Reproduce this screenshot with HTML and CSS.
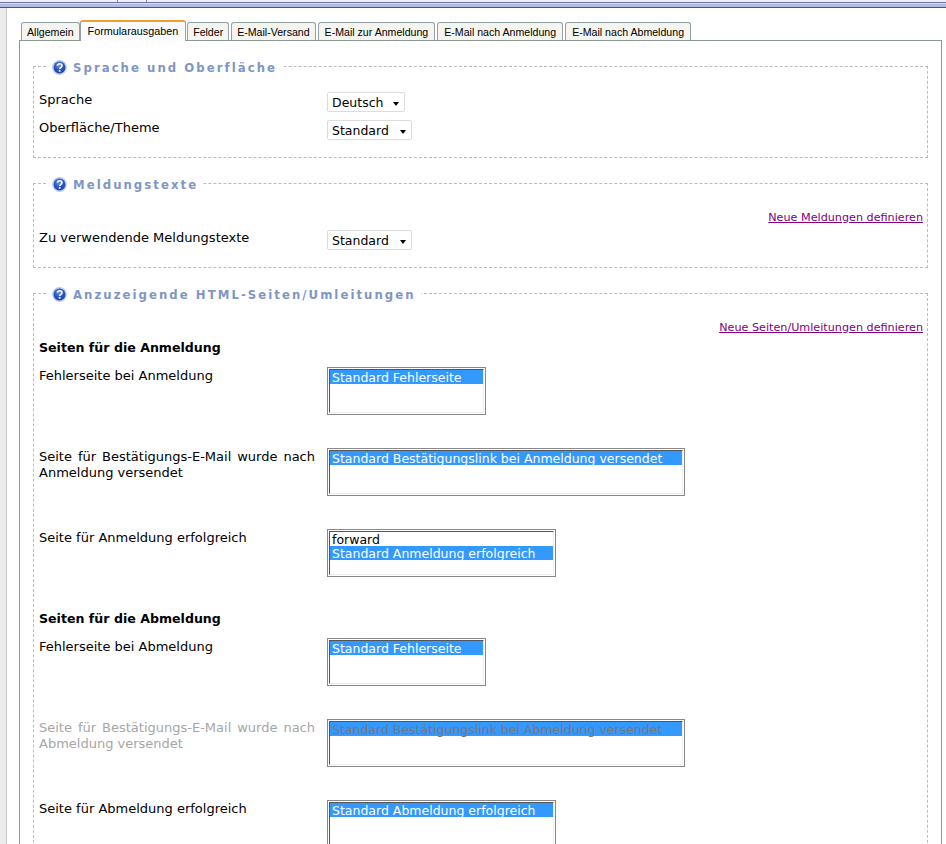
FILE: index.html
```html
<!DOCTYPE html>
<html lang="de">
<head>
<meta charset="utf-8">
<title>Formularausgaben</title>
<link rel="stylesheet" href="styles.css">
</head>
<body>
<svg class="defs" width="0" height="0" aria-hidden="true">
  <defs>
    <radialGradient id="helpFill" cx="45%" cy="35%" r="65%">
      <stop offset="0" stop-color="#6f93e4"/>
      <stop offset="0.55" stop-color="#2a58c4"/>
      <stop offset="1" stop-color="#1d44a6"/>
    </radialGradient>
    <symbol id="help" viewBox="0 0 15 15">
      <circle cx="7.500" cy="7.500" r="7.400" fill="#bccdf0"/>
      <circle cx="7.500" cy="7.500" r="5.900" fill="url(#helpFill)"/>
      <path d="M5.300 5.700C5.500 4.300 6.500 3.700 7.700 3.700c1.400 0 2.300.8 2.300 1.900 0 1-.6 1.500-1.300 2-.6.4-.9.7-.9 1.400" fill="none" stroke="#fff" stroke-width="1.600"/>
      <rect x="6.800" y="10" width="1.700" height="1.700" fill="#fff"/>
    </symbol>
  </defs>
</svg>
<div class="topbar"><span class="topcell c1"></span><span class="topcell c2"></span></div>
<div class="main">
  <div class="strip"></div>
  <div class="content">
    <nav class="tabs">
      <a class="tab">Allgemein</a>
      <a class="tab active">Formularausgaben</a>
      <a class="tab">Felder</a>
      <a class="tab">E-Mail-Versand</a>
      <a class="tab wide">E-Mail zur Anmeldung</a>
      <a class="tab wide">E-Mail nach Anmeldung</a>
      <a class="tab wide">E-Mail nach Abmeldung</a>
    </nav>
    <div class="panel">
      <fieldset class="group g1">
        <legend><svg class="help"><use href="#help"/></svg><span>Sprache und Oberfläche</span></legend>
        <div class="row short">
          <label class="lab">Sprache</label>
          <span class="dd"><select class="w78"><option>Deutsch</option></select></span>
        </div>
        <div class="row short">
          <label class="lab">Oberfläche/Theme</label>
          <span class="dd"><select class="w85"><option>Standard</option></select></span>
        </div>
      </fieldset>
      <fieldset class="group g2">
        <legend><svg class="help"><use href="#help"/></svg><span>Meldungstexte</span></legend>
        <div class="linkrow"><a class="more">Neue Meldungen definieren</a></div>
        <div class="row short">
          <label class="lab">Zu verwendende Meldungstexte</label>
          <span class="dd"><select class="w85"><option>Standard</option></select></span>
        </div>
      </fieldset>
      <fieldset class="group g3">
        <legend><svg class="help"><use href="#help"/></svg><span>Anzuzeigende HTML-Seiten/Umleitungen</span></legend>
        <div class="linkrow"><a class="more">Neue Seiten/Umleitungen definieren</a></div>
        <h3 class="sub">Seiten für die Anmeldung</h3>
        <div class="row">
          <div class="lab">Fehlerseite bei Anmeldung</div>
          <div class="list w159"><div class="inner"><div class="opt sel">Standard Fehlerseite</div></div></div>
        </div>
        <div class="row">
          <div class="lab">Seite für Bestätigungs-E-Mail wurde nach Anmeldung versendet</div>
          <div class="list w358"><div class="inner"><div class="opt sel">Standard Bestätigungslink bei Anmeldung versendet</div></div></div>
        </div>
        <div class="row">
          <div class="lab">Seite für Anmeldung erfolgreich</div>
          <div class="list w229"><div class="inner"><div class="opt">forward</div><div class="opt sel">Standard Anmeldung erfolgreich</div></div></div>
        </div>
        <h3 class="sub">Seiten für die Abmeldung</h3>
        <div class="row">
          <div class="lab">Fehlerseite bei Abmeldung</div>
          <div class="list w159"><div class="inner"><div class="opt sel">Standard Fehlerseite</div></div></div>
        </div>
        <div class="row off">
          <div class="lab">Seite für Bestätigungs-E-Mail wurde nach Abmeldung versendet</div>
          <div class="list w358"><div class="inner"><div class="opt sel">Standard Bestätigungslink bei Abmeldung versendet</div></div></div>
        </div>
        <div class="row">
          <div class="lab">Seite für Abmeldung erfolgreich</div>
          <div class="list w229"><div class="inner"><div class="opt sel">Standard Abmeldung erfolgreich</div></div></div>
        </div>
      </fieldset>
    </div>
  </div>
</div>
</body>
</html>
```
FILE: styles.css
```css
* { box-sizing: border-box; }
html, body { margin: 0; height: 844px; overflow: hidden; background: #fff; }
body { font-family: "DejaVu Sans", Verdana, sans-serif; font-size: 12.500px; color: #000; }
.defs { position: absolute; }

.topbar { display: flex; height: 8px; background: linear-gradient(#eef0f8 0 2px, #70749a 2px 3px, #d5dbf3 3px 4px, #b0bce8 4px 7px, #555 7px 8px); }
.topcell { height: 2px; border-right: 1px solid #888; }
.c1 { width: 118px; }
.c2 { width: 29px; }
.main { display: flex; height: 836px; }
.strip { width: 7px; background: #ececec; border-right: 1px solid #c8c8c8; }
.content { flex: 1; padding: 12px 4px 0 12px; min-width: 0; }

.tabs { display: flex; gap: 2px; height: 20px; padding-left: 2px; align-items: flex-end; position: relative; z-index: 1; }
.tab { display: block; height: 18px; padding: 0 5px; font: 10.600px/18px "Liberation Sans", Arial, sans-serif; color: #000; background: #f5f4ee; border: 1px solid #8fa3a3; border-bottom: 0; border-radius: 3px 3px 0 0; }
.tab.wide { padding: 0 6px; }
.tab.active { height: 21px; margin: -2px -1px -1px -2px; padding: 0 7px; font-size: 10.800px; background: #fbfbfd; border-top: 2px solid #f0a030; line-height: 18px; }

.panel { border: 1px solid #8a9a94; height: 900px; padding: 17px 13px 0 13px; }
.group { margin: 0 0 17px; padding: 0 5px; border: 1px dashed #bbb; min-width: 0; }
.group legend { display: flex; align-items: center; gap: 6px; margin-left: 8px; padding: 2px 5px 0; height: 16px; font-size: 11.700px; font-weight: bold; letter-spacing: 2.050px; color: #7f96c4; }
.group legend span { padding-top: 2px; }
.help { width: 15px; height: 15px; flex: none; }

.g1 { height: 100px; padding-top: 18px; }
.g2 { height: 93px; padding-top: 20px; }
.g3 { padding-top: 20px; }

.row { display: grid; grid-template-columns: 288px auto; justify-content: start; margin-bottom: 33px; }
.row.short { margin-bottom: 8px; height: 20px; }
.lab { width: 276px; font-size: 13px; line-height: 16px; text-align: justify; }
.row.off .lab { color: #a6a6a6; }

.dd { position: relative; display: inline-block; height: 20px; }
.dd select { appearance: none; display: block; height: 20px; padding: 1px 0 0 4px; font: inherit; line-height: 18px; color: #000; background: #fff; border: 1px solid #dcdcdc; border-radius: 2px; }
.dd::after { content: ""; position: absolute; right: 6px; top: 10px; border-style: solid; border-width: 4px 3.500px 0; border-color: #000 transparent transparent; pointer-events: none; }
.w78 { width: 78px; }
.w85 { width: 85px; }

.linkrow { display: flex; justify-content: flex-end; height: 19px; margin-right: -1px; }
.more { font-size: 11.200px; line-height: 14px; height: 14px; color: #800080; text-decoration: underline; }

.sub { margin: 0 0 12px; font-size: 12.600px; line-height: 16px; font-weight: bold; }

.list { height: 48px; margin: -1px 0 1px; padding: 1px; border: 1px solid #888; background: #fff; overflow: hidden; }
.inner { height: 100%; border: 1px solid; border-color: #555 #eee #eee #555; overflow: hidden; }
.opt { height: 14px; padding: 0 2px; line-height: 15px; white-space: nowrap; }
.opt.sel { background: #3399ff; color: #fff; }
.row.off .opt.sel { color: #777; }
.w159 { width: 159px; }
.w358 { width: 358px; }
.w229 { width: 229px; }
```
